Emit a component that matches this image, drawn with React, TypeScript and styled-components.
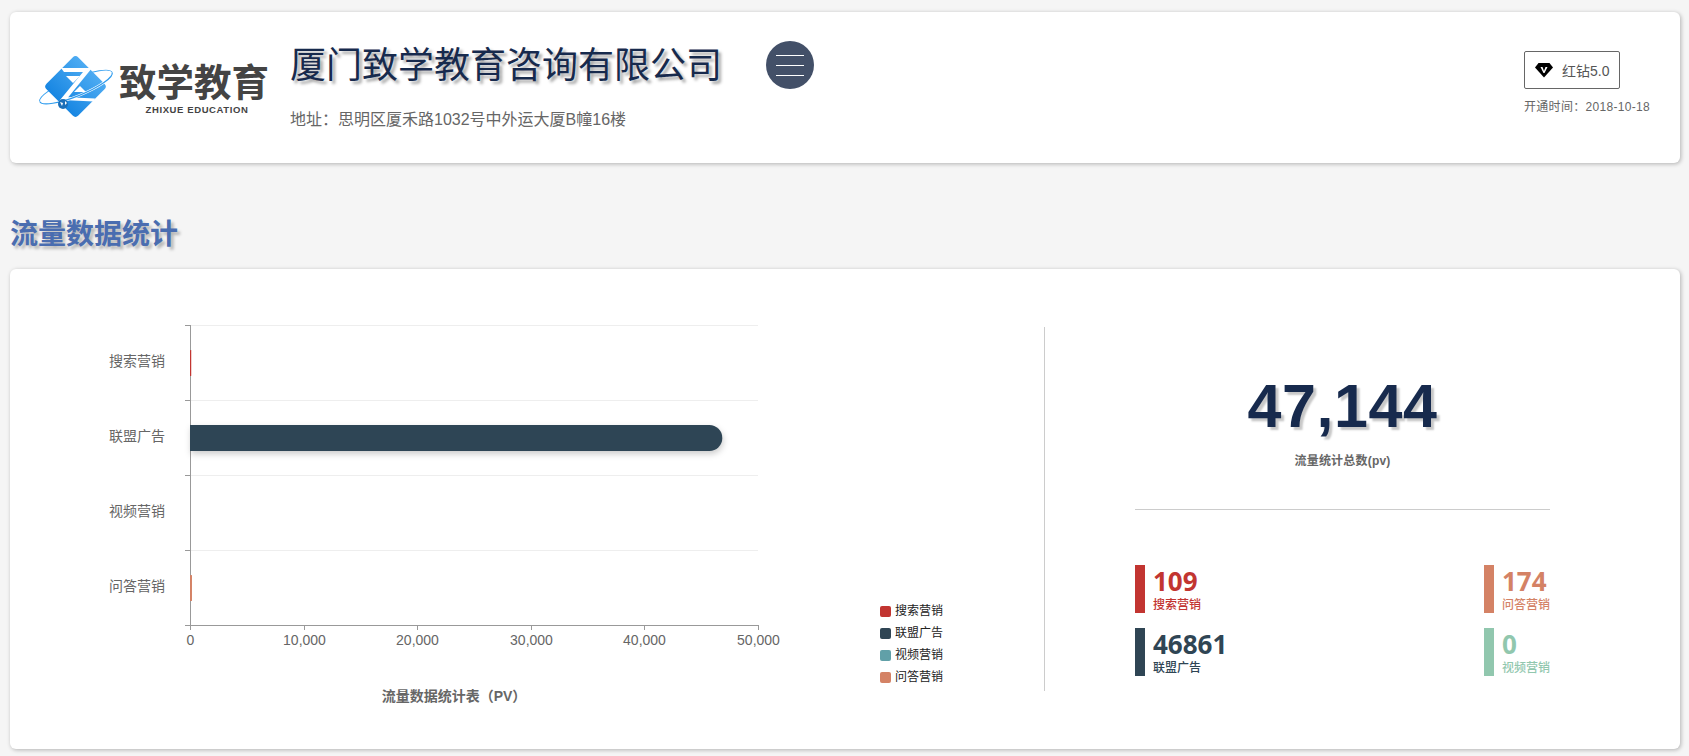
import styled, { createGlobalStyle } from "styled-components";

const GlobalStyle = createGlobalStyle`
  html, body {
    margin: 0;
    padding: 0;
    background: #f5f5f5;
    font-family: "Liberation Sans", "Noto Sans CJK SC", sans-serif;
    overflow: hidden;
  }
`;

const Page = styled.div`
  width: 1689px;
  height: 756px;
  box-sizing: border-box;
  padding: 12px 9px 0 10px;
`;

const Card = styled.section`
  background: #fff;
  border-radius: 6px;
  box-shadow: 1px 1px 4px rgba(0, 0, 0, 0.28);
`;

const Header = styled(Card)`
  height: 151px;
  display: flex;
  align-items: flex-start;
`;

const LogoBox = styled.div`
  width: 280px;
  flex: none;
  display: flex;
  padding: 40px 0 0 30px;
  box-sizing: border-box;
`;

const LogoMarkSvg = styled.svg`
  display: block;
  flex: none;
  overflow: visible;
`;

const LogoWords = styled.div`
  margin: 12px 0 0 3px;
  display: flex;
  flex-direction: column;
  align-items: center;
  color: #444;
`;

const LogoName = styled.div`
  font-size: 37.5px;
  line-height: 38px;
  font-weight: 700;
  white-space: nowrap;
`;

const LogoSub = styled.div`
  margin: 2px 0 0 6px;
  font-size: 9.5px;
  line-height: 11px;
  font-weight: 700;
  letter-spacing: 0.6px;
  white-space: nowrap;
`;

const CompanyBox = styled.div`
  width: 476px;
  flex: none;
  padding-top: 36px;
  box-sizing: border-box;
`;

const CompanyName = styled.h1`
  margin: 0;
  font-size: 36px;
  line-height: 36px;
  font-weight: 400;
  color: #172a4d;
  white-space: nowrap;
  text-shadow: 3px 3px 3px rgba(0, 0, 0, 0.35);
`;

const Address = styled.div`
  margin-top: 26px;
  font-size: 16px;
  line-height: 20px;
  color: #666;
  white-space: nowrap;
`;

const MenuButton = styled.button`
  margin-top: 29px;
  width: 48px;
  height: 48px;
  flex: none;
  border: 0;
  padding: 0;
  border-radius: 50%;
  background: #435068;
  display: flex;
  flex-direction: column;
  align-items: center;
  justify-content: center;
  gap: 9px;
`;

const MenuLine = styled.span`
  display: block;
  width: 28px;
  height: 1px;
  background: #fff;
`;

const PlanBox = styled.div`
  margin-left: auto;
  width: 156px;
  flex: none;
  padding-top: 39px;
`;

const PlanBadge = styled.div`
  width: 96px;
  height: 38px;
  box-sizing: border-box;
  border: 1px solid #666;
  border-radius: 2px;
  display: flex;
  align-items: center;
  padding-left: 10px;
  gap: 9px;
  font-size: 14px;
  color: #555;
`;

const PlanDate = styled.div`
  margin-top: 10px;
  font-size: 12px;
  line-height: 16px;
  color: #666;
  letter-spacing: 0.3px;
  white-space: nowrap;
`;

const SectionTitle = styled.h2`
  margin: 58px 0 20px;
  font-size: 28px;
  line-height: 28px;
  font-weight: 700;
  color: #4a6db0;
  text-shadow: 3px 3px 3px rgba(0, 0, 0, 0.25);
`;

const StatsCard = styled(Card)`
  height: 480px;
  display: flex;
  align-items: flex-start;
`;

const ChartArea = styled.div`
  width: 1034px;
  height: 480px;
  flex: none;
  display: flex;
  align-items: flex-end;
  padding: 0 0 58px 90px;
  box-sizing: border-box;
`;

const ChartSvg = styled.svg`
  display: block;
  flex: none;
  margin-bottom: -19px;
`;

const AxisText = styled.text`
  font-size: 14px;
  fill: #666;
  font-family: "Liberation Sans", "Noto Sans CJK SC", sans-serif;
`;

const AxisTitle = styled(AxisText)`
  font-weight: 700;
`;

const Legend = styled.ul`
  list-style: none;
  margin: 0 0 6px 90px;
  padding: 0;
  display: flex;
  flex-direction: column;
  gap: 6px;
`;

const LegendRow = styled.li`
  display: flex;
  align-items: center;
  gap: 4px;
  font-size: 12px;
  line-height: 16px;
  color: #222;
  white-space: nowrap;
`;

const LegendSwatch = styled.i<{ $color: string }>`
  width: 11px;
  height: 11px;
  border-radius: 2px;
  background: ${(p) => p.$color};
`;

const TotalPanel = styled.div`
  margin-top: 58px;
  width: 636px;
  height: 364px;
  flex: none;
  box-sizing: border-box;
  border-left: 1px solid #ccc;
  padding: 49px 0 0 90px;
`;

const TotalInner = styled.div`
  width: 415px;
`;

const TotalNumber = styled.div`
  font-family: "Liberation Sans", Arial, sans-serif;
  font-size: 61px;
  line-height: 60px;
  font-weight: 700;
  letter-spacing: 0.6px;
  text-align: center;
  color: #172a4d;
  text-shadow: 3px 3px 2px rgba(0, 0, 0, 0.22);
`;

const TotalLabel = styled.div`
  margin-top: 17px;
  font-size: 12px;
  line-height: 16px;
  font-weight: 700;
  letter-spacing: 0.2px;
  text-align: center;
  color: #666;
`;

const Rule = styled.hr`
  margin: 40px 0 55px;
  border: 0;
  border-top: 1px solid #ccc;
`;

const SourceGrid = styled.div`
  display: grid;
  grid-template-columns: auto auto;
  justify-content: space-between;
  row-gap: 15px;
`;

const Source = styled.div<{ $color: string }>`
  height: 48px;
  box-sizing: border-box;
  border-left: 10px solid ${(p) => p.$color};
  padding-left: 8px;
  color: ${(p) => p.$color};
`;

const SourceValue = styled.div`
  font-family: "Open Sans", sans-serif;
  font-size: 26px;
  line-height: 32px;
  font-weight: 700;
`;

const SourceName = styled.div`
  font-size: 12px;
  line-height: 16px;
  font-weight: 500;
  white-space: nowrap;
`;

const channels = [
  { name: "搜索营销", value: 109, color: "#c23531" },
  { name: "联盟广告", value: 46861, color: "#2f4554" },
  { name: "视频营销", value: 0, color: "#61a0a8" },
  { name: "问答营销", value: 174, color: "#d48265" },
];

const summary = [
  { name: "搜索营销", value: "109", color: "#c23531" },
  { name: "问答营销", value: "174", color: "#d48265" },
  { name: "联盟广告", value: "46861", color: "#2f4554" },
  { name: "视频营销", value: "0", color: "#91c7ae" },
];

function LogoMark() {
  return (
    <LogoMarkSvg width="76" height="68" viewBox="0 0 76 68">
      <defs>
        <linearGradient id="logoFill" x1="0" y1="0" x2="0" y2="1">
          <stop offset="0" stopColor="#4dabf2" />
          <stop offset="1" stopColor="#1786e2" />
        </linearGradient>
      </defs>
      <g transform="rotate(-22 36 35)" fill="none">
        <path d="M-3 35A39 9 0 0 1 75 35" stroke="#3aa2f0" strokeWidth="1" />
      </g>
      <rect x="13" y="12" width="45" height="45" rx="4" transform="rotate(45 35.500 34.500)" fill="url(#logoFill)" />
      <path d="M21 16H52L26 48H20L43 20H24Z" fill="#fff" />
      <path d="M24 45L55 46.500L54 49.500L22 48Z" fill="#fff" />
      <path d="M26 24H40L33 31Z" fill="#fff" />
      <path d="M40 34L46 40H34Z" fill="#fff" />
      <g transform="rotate(-22 36 35)" fill="none">
        <path d="M-3 35A39 9 0 0 0 75 35" stroke="#fff" strokeWidth="2.500" />
        <path d="M-3 35A39 9 0 0 0 75 35" stroke="#2f9cee" strokeWidth="1.200" />
      </g>
      <circle cx="23" cy="52" r="5" fill="#1c6fb8" />
      <path d="M20 50l3 1-1 3zM25 49l2 2-2 2z" fill="#fff" />
    </LogoMarkSvg>
  );
}

function GemIcon() {
  return (
    <svg width="18" height="16" viewBox="0 0 18 16">
      <path d="M3.500 1h11L18 5.500 9 15.500 0 5.500z" fill="#000" />
      <path d="M5.500 5h2L9 9l1.500-4h2L9.500 11h-1z" fill="#fff" />
    </svg>
  );
}

// svg coordinates, plot origin at (90, 5)
function Chart() {
  const left = 90;
  const top = 5;
  const band = 75;
  const width = 568;
  const max = 50000;
  const bottom = top + band * channels.length;
  const ticks = [0, 10000, 20000, 30000, 40000, 50000];

  return (
    <ChartSvg width="690" height="390" viewBox="0 0 690 390">
      <defs>
        <filter id="barShadow" x="-5%" y="-40%" width="110%" height="200%">
          <feDropShadow dx="1" dy="3" stdDeviation="3" floodColor="#000" floodOpacity="0.2" />
        </filter>
      </defs>
      {channels.map((c, i) => (
        <line key={c.name} x1={left} x2={left + width} y1={top + band * i + 0.5} y2={top + band * i + 0.5} stroke="#eee" />
      ))}
      <line x1={left + 0.5} x2={left + 0.5} y1={top} y2={bottom} stroke="#999" />
      <line x1={left} x2={left + width + 1} y1={bottom + 0.5} y2={bottom + 0.5} stroke="#999" />
      {channels.map((c, i) => {
        const w = (c.value / max) * width;
        const y = top + band * i + 25;
        if (w === 0) return null;
        if (w < 13) {
          return <rect key={c.name} x={left} y={y} width={w} height={26} rx={0.5} fill={c.color} />;
        }
        return (
          <path
            key={c.name}
            d={`M${left} ${y}h${w - 13}a13 13 0 0 1 0 26h${13 - w}z`}
            fill={c.color}
            filter="url(#barShadow)"
          />
        );
      })}
      {[0, 1, 2, 3, 4].map((i) => (
        <line key={i} x1={left - 5} x2={left} y1={top + band * i + 0.5} y2={top + band * i + 0.5} stroke="#999" />
      ))}
      {ticks.map((t) => {
        const x = Math.round(left + (t / max) * width) + 0.5;
        return (
          <g key={t}>
            <line x1={x} x2={x} y1={bottom} y2={bottom + 5} stroke="#999" />
            <AxisText x={x} y={bottom + 20} textAnchor="middle">
              {t.toLocaleString("en-US")}
            </AxisText>
          </g>
        );
      })}
      {channels.map((c, i) => (
        <AxisText key={c.name} x={left - 25} y={top + band * i + 41} textAnchor="end">
          {c.name}
        </AxisText>
      ))}
      <AxisTitle x={354} y={381} textAnchor="middle">
        流量数据统计表（PV）
      </AxisTitle>
    </ChartSvg>
  );
}

export default function App() {
  return (
    <>
      <GlobalStyle />
      <Page>
        <Header>
          <LogoBox>
            <LogoMark />
            <LogoWords>
              <LogoName>致学教育</LogoName>
              <LogoSub>ZHIXUE EDUCATION</LogoSub>
            </LogoWords>
          </LogoBox>
          <CompanyBox>
            <CompanyName>厦门致学教育咨询有限公司</CompanyName>
            <Address>地址：思明区厦禾路1032号中外运大厦B幢16楼</Address>
          </CompanyBox>
          <MenuButton type="button" aria-label="菜单">
            <MenuLine />
            <MenuLine />
            <MenuLine />
          </MenuButton>
          <PlanBox>
            <PlanBadge>
              <GemIcon />
              红钻5.0
            </PlanBadge>
            <PlanDate>开通时间：2018-10-18</PlanDate>
          </PlanBox>
        </Header>
        <SectionTitle>流量数据统计</SectionTitle>
        <StatsCard>
          <ChartArea>
            <Chart />
            <Legend>
              {channels.map((c) => (
                <LegendRow key={c.name}>
                  <LegendSwatch $color={c.color} />
                  {c.name}
                </LegendRow>
              ))}
            </Legend>
          </ChartArea>
          <TotalPanel>
            <TotalInner>
              <TotalNumber>47,144</TotalNumber>
              <TotalLabel>流量统计总数(pv)</TotalLabel>
              <Rule />
              <SourceGrid>
                {summary.map((s) => (
                  <Source key={s.name} $color={s.color}>
                    <SourceValue>{s.value}</SourceValue>
                    <SourceName>{s.name}</SourceName>
                  </Source>
                ))}
              </SourceGrid>
            </TotalInner>
          </TotalPanel>
        </StatsCard>
      </Page>
    </>
  );
}
